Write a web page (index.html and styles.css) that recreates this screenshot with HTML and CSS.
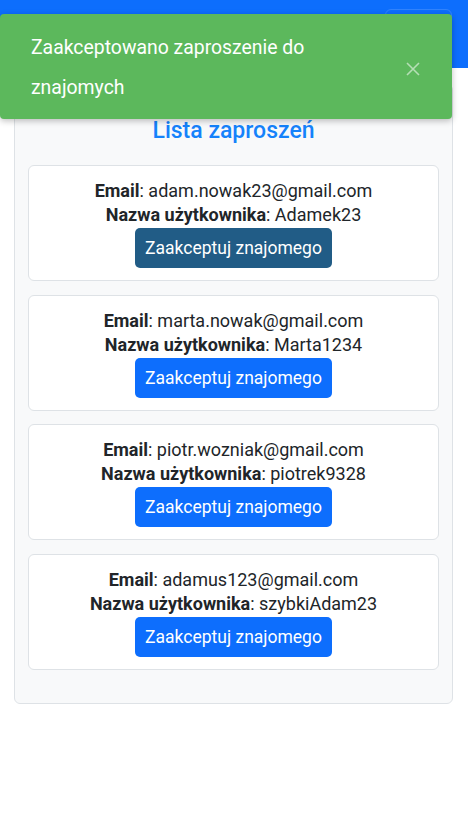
FILE: index.html
```html
<!DOCTYPE html>
<html lang="pl">
<head>
<meta charset="utf-8">
<title>Lista zaproszeń</title>
<link rel="stylesheet" href="styles.css">
</head>
<body>
<nav class="navbar">
  <button class="toggler" aria-label="menu"></button>
</nav>
<div class="toast">
  <div class="toast-text">Zaakceptowano zaproszenie do znajomych</div>
  <button class="toast-close" aria-label="Zamknij">
    <svg width="14" height="14" viewBox="0 0 14 14"><path d="M1 1L13 13M13 1L1 13" stroke="currentColor" stroke-width="1.6" fill="none"/></svg>
  </button>
</div>
<main class="panel">
  <h3 class="title">Lista zaproszeń</h3>
  <div class="card">
    <div class="line"><b>Email</b>: adam.nowak23@gmail.com</div>
    <div class="line"><b>Nazwa użytkownika</b>: Adamek23</div>
    <button class="btn btn-active">Zaakceptuj znajomego</button>
  </div>
  <div class="card">
    <div class="line"><b>Email</b>: marta.nowak@gmail.com</div>
    <div class="line"><b>Nazwa użytkownika</b>: Marta1234</div>
    <button class="btn">Zaakceptuj znajomego</button>
  </div>
  <div class="card">
    <div class="line"><b>Email</b>: piotr.wozniak@gmail.com</div>
    <div class="line"><b>Nazwa użytkownika</b>: piotrek9328</div>
    <button class="btn">Zaakceptuj znajomego</button>
  </div>
  <div class="card">
    <div class="line"><b>Email</b>: adamus123@gmail.com</div>
    <div class="line"><b>Nazwa użytkownika</b>: szybkiAdam23</div>
    <button class="btn">Zaakceptuj znajomego</button>
  </div>
</main>
</body>
</html>
```
FILE: styles.css
```css
* { box-sizing: border-box; }
html, body { margin: 0; padding: 0; background: #fff; }
body {
  font-family: Roboto, "Liberation Sans", sans-serif;
  color: #212529;
  font-size: 16px;
}
.navbar {
  height: 68px;
  background: #0d6efd;
  position: relative;
}
.toggler {
  position: absolute;
  left: 385px;
  top: 9px;
  width: 67px;
  height: 42px;
  border: 1px solid rgba(255,255,255,0.15);
  border-radius: 6px;
  background: transparent;
}
.toast {
  position: absolute;
  left: 0;
  top: 14px;
  width: 452px;
  height: 105px;
  background: #5cb85c;
  border-radius: 4px;
  box-shadow: 0 2px 6px rgba(0,0,0,0.25);
  display: flex;
  align-items: center;
  padding: 14px 32px 11px 31px;
  z-index: 10;
}
.toast-text {
  flex: 1;
  color: #fff;
  font-size: 19.4px;
  line-height: 40px;
  max-width: 320px;
}
.toast-close {
  margin-left: auto;
  background: none;
  border: 0;
  padding: 0;
  color: rgba(255,255,255,0.55);
  width: 14px;
  height: 14px;
  display: block;
  margin-top: 2px;
}
.toast-close svg { display: block; }
.panel {
  margin: 16px 15px 0 14px;
  background: #f8f9fa;
  border: 1px solid #dee2e6;
  border-radius: 6px;
  padding: 34px 13px 33px 13px;
  display: flex;
  flex-direction: column;
  gap: 13.3px;
}
.title {
  margin: 0 0 8.7px 0;
  text-align: center;
  color: #1582fb;
  font-size: 23px;
  font-weight: 500;
  line-height: 24px;
}
.card {
  background: #fff;
  border: 1px solid #dee2e6;
  border-radius: 6px;
  padding: 13px 12px 12px;
  display: flex;
  flex-direction: column;
  align-items: center;
  text-align: center;
  height: 116.3px;
}
.line {
  font-size: 18px;
  line-height: 24px;
}
.line b { font-weight: 700; }
.btn {
  margin-top: 1px;
  height: 40px;
  width: 197px;
  padding: 0;
  border: 0;
  border-radius: 5px;
  background: #0d6efd;
  color: #fff;
  font-family: Roboto, "Liberation Sans", sans-serif;
  font-size: 17.5px;
}
.btn-active {
  background: #215c86;
}
```
